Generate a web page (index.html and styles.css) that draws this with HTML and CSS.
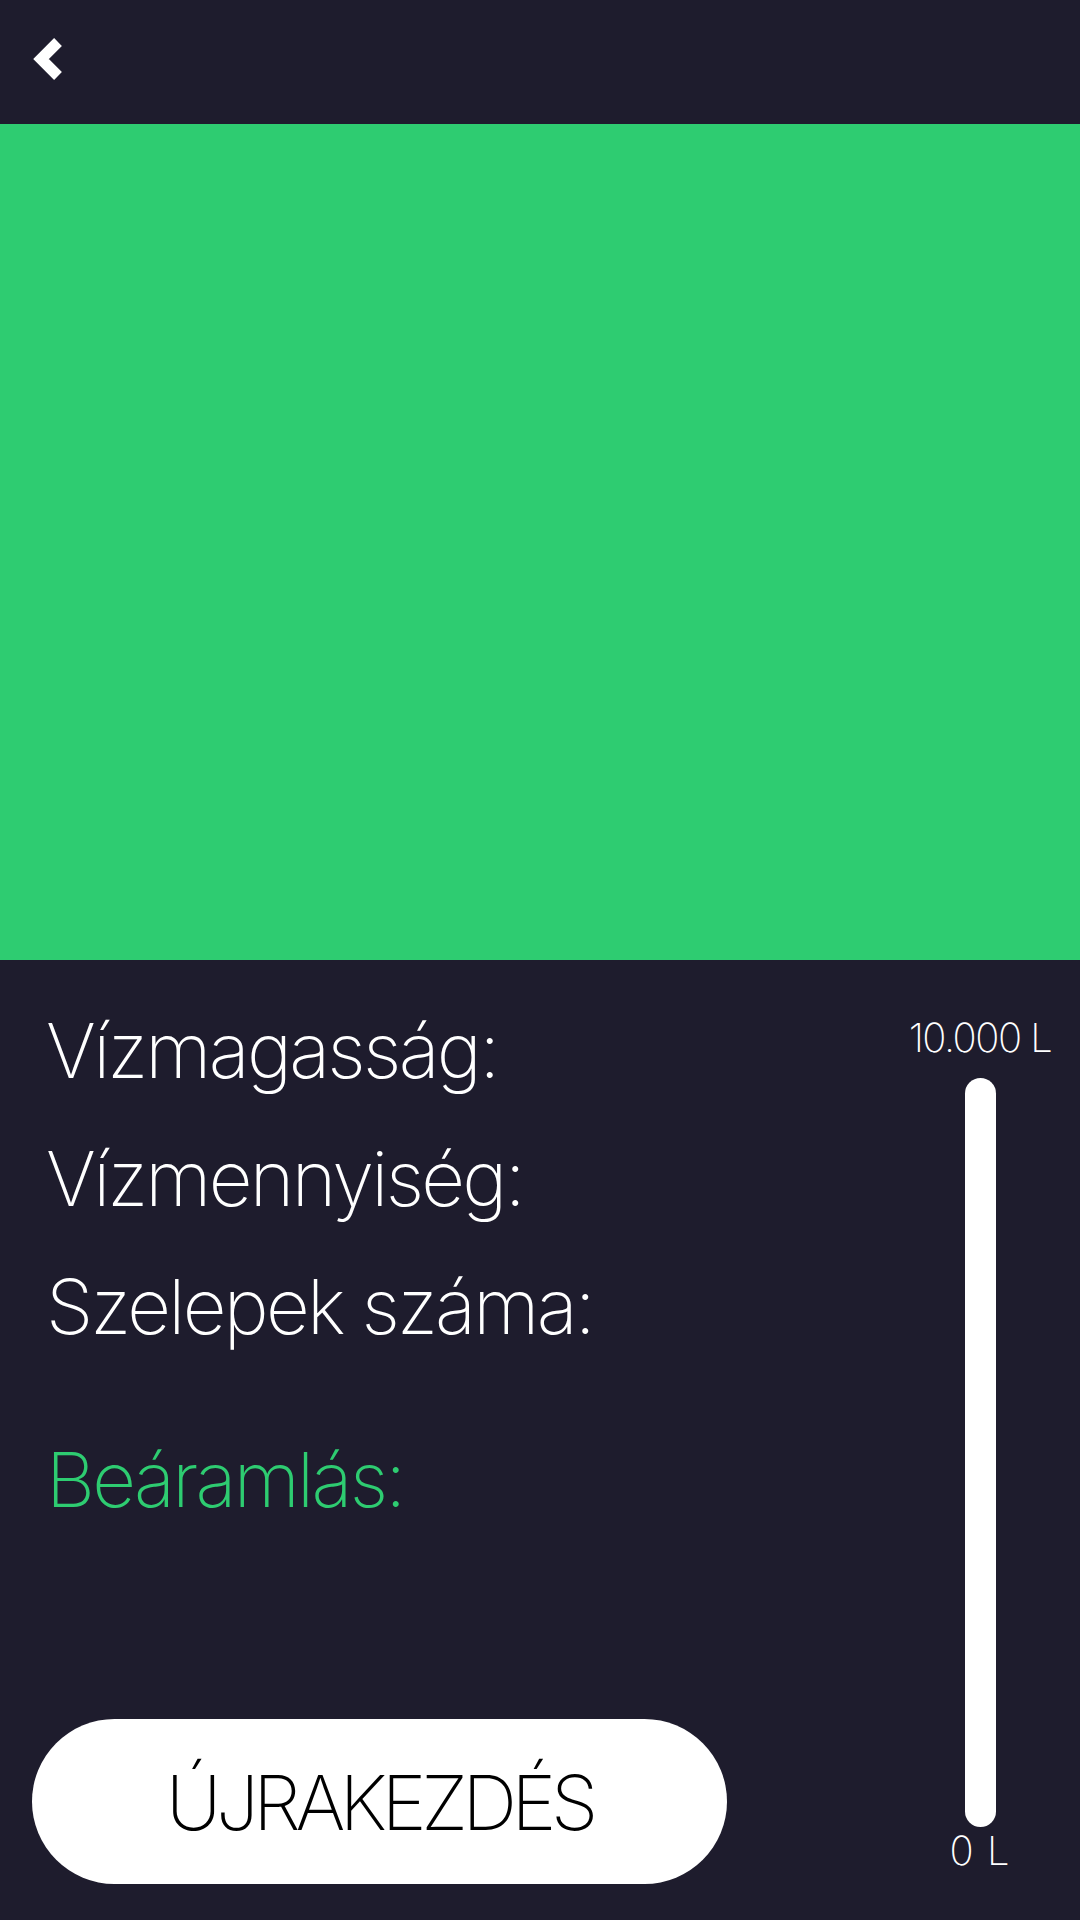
FILE: index.html
```html
<!DOCTYPE html>
<html lang="hu">
<head>
<meta charset="utf-8">
<link rel="stylesheet" href="styles.css">
</head>
<body>
<div class="app">
  <header class="topbar">
    <svg class="back" width="80" height="124" viewBox="0 0 80 124">
      <polyline points="58,42 41,59 58,76" fill="none" stroke="#ffffff" stroke-width="11" stroke-linecap="butt" stroke-linejoin="miter"/>
    </svg>
  </header>
  <section class="canvas"></section>
  <section class="panel">
    <div class="info">
      <div class="row">Vízmagasság:</div>
      <div class="row">Vízmennyiség:</div>
      <div class="row">Szelepek száma:</div>
      <div class="row accent">Beáramlás:</div>
      <div class="spacer"></div>
      <button class="restart">ÚJRAKEZDÉS</button>
    </div>
    <div class="gauge">
      <div class="gauge-label">10.000 L</div>
      <div class="gauge-bar"></div>
      <div class="gauge-label low">0 L</div>
    </div>
  </section>
</div>
</body>
</html>
```
FILE: styles.css
```css
html, body {
  margin: 0;
  padding: 0;
  background: #1e1c2d;
}
.app {
  width: 1080px;
  height: 1920px;
  display: flex;
  flex-direction: column;
  font-family: Inter, "Noto Sans", sans-serif;
  font-weight: 200;
  color: #ffffff;
}
.topbar {
  height: 124px;
  flex: none;
  display: flex;
  align-items: flex-start;
}
.back {
  display: block;
}
.canvas {
  height: 836px;
  flex: none;
  background: #2ecc71;
}
.panel {
  flex: 1;
  display: flex;
  flex-direction: row;
}
.info {
  flex: 1;
  display: flex;
  flex-direction: column;
  padding: 26px 0 36px 32px;
}
.row {
  font-size: 76px;
  font-weight: 200;
  line-height: 128px;
  padding-left: 14px;
  letter-spacing: -2.7px;
  white-space: nowrap;
}
.row.accent {
  color: #2ecc71;
  margin-top: 45px;
}
.spacer {
  flex: 1;
}
.restart {
  width: 695px;
  height: 165px;
  border: none;
  border-radius: 83px;
  background: #ffffff;
  color: #000000;
  font-family: Inter, "Noto Sans", sans-serif;
  font-weight: 200;
  font-size: 76px;
  letter-spacing: -5.4px;
  padding: 0;
  cursor: pointer;
}
.gauge {
  width: 200px;
  display: flex;
  flex-direction: column;
  align-items: center;
  padding: 54px 0 0 0;
  box-sizing: border-box;
}
.gauge-label {
  font-size: 40px;
  font-weight: 200;
  line-height: 48px;
  white-space: nowrap;
  letter-spacing: -1.5px;
}
.gauge-label.low {
  letter-spacing: 1px;
}
.gauge-bar {
  width: 31px;
  height: 749px;
  margin-top: 16px;
  background: #ffffff;
  border-radius: 16px;
}
```
